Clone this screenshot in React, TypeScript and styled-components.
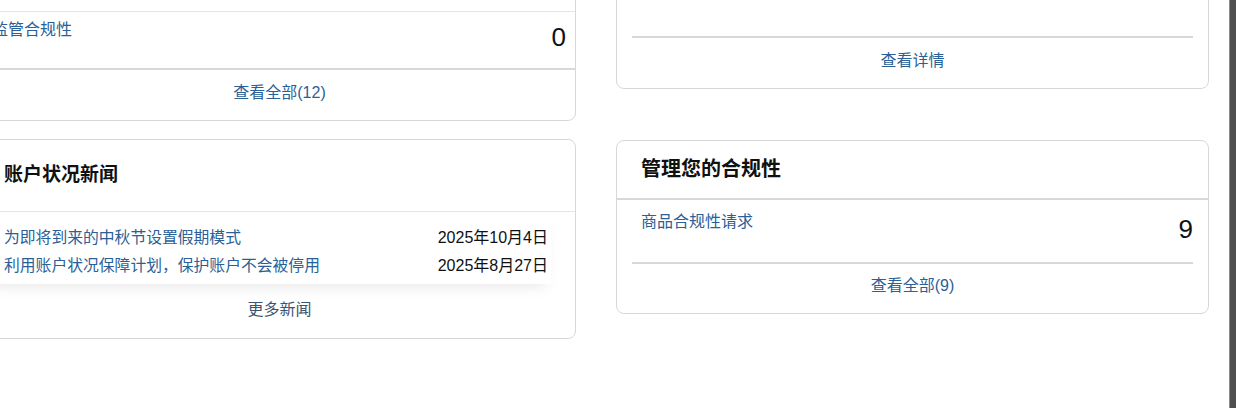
import React from "react";
import styled, { createGlobalStyle } from "styled-components";

const Global = createGlobalStyle`
  html, body { margin: 0; padding: 0; background: #ffffff; }
  body {
    height: 408px;
    overflow: hidden;
    font-family: "Liberation Sans", Arial, "Noto Sans CJK SC", sans-serif;
    color: #0f1111;
  }
`;

const Page = styled.div`
  display: flex;
  width: 1236px;
  height: 408px;
  overflow: hidden;
`;

const Main = styled.div`
  flex: 1;
  overflow: hidden;
`;

const ScrollStrip = styled.div`
  width: 6px;
  flex: none;
  background: #4f4f4f;
  border-left: 1px solid #8c8c8c;
`;

const Grid = styled.div`
  display: grid;
  grid-template-columns: 593px 593px;
  column-gap: 40px;
  margin-left: -17px;
  align-items: start;
`;

const Column = styled.div<{ $gap: number }>`
  display: flex;
  flex-direction: column;
  gap: ${(p) => p.$gap}px;
  margin-top: -60px;
`;

const Card = styled.section`
  border: 1px solid #d5d9d9;
  border-radius: 8px;
  background: #ffffff;
  overflow: hidden;
`;

const Spacer = styled.div<{ $h: number }>`
  height: ${(p) => p.$h}px;
`;

const MetricRow = styled.div<{ $h: number; $pl: number; $pr: number; $pt: number; $top?: boolean }>`
  display: flex;
  justify-content: space-between;
  align-items: flex-start;
  box-sizing: border-box;
  height: ${(p) => p.$h}px;
  padding: ${(p) => p.$pt}px ${(p) => p.$pr}px 0 ${(p) => p.$pl}px;
  border-top: ${(p) => (p.$top ? "1px solid #e3e6e6" : "none")};
`;

const MetricLabel = styled.a`
  font-size: 16px;
  line-height: 20px;
  color: #2a5f97;
  text-decoration: none;
`;

const MetricValue = styled.span`
  font-size: 26px;
  line-height: 30px;
  margin-top: 2px;
  color: #0f1111;
`;

const Rule = styled.div<{ $inset: number }>`
  height: 2px;
  background: #d5d9d9;
  margin: 0 ${(p) => p.$inset}px;
`;

const Footer = styled.div<{ $pt: number; $pb: number }>`
  display: flex;
  justify-content: center;
  padding: ${(p) => p.$pt}px 0 ${(p) => p.$pb}px;
`;

const FooterLink = styled.a<{ $muted?: boolean }>`
  font-size: 16px;
  line-height: 20px;
  color: ${(p) => (p.$muted ? "#3b5470" : "#2a5f97")};
  text-decoration: none;
`;

const Header = styled.div<{ $pt: number; $pb: number; $pl: number; $line: "thin" | "thick" }>`
  padding: ${(p) => p.$pt}px 20px ${(p) => p.$pb}px ${(p) => p.$pl}px;
  border-bottom: ${(p) => (p.$line === "thin" ? "1px solid #e3e6e6" : "2px solid #d5d9d9")};
`;

const Title = styled.h2<{ $size: number }>`
  margin: 0;
  font-size: ${(p) => p.$size}px;
  line-height: 28px;
  font-weight: 700;
  color: #0f1111;
`;

const NewsList = styled.ul`
  list-style: none;
  margin: 0 24px 0 0;
  padding: 12px 3px 4px 20px;
  background: #ffffff;
  box-shadow: 0 8px 14px -6px rgba(0, 0, 0, 0.1);
`;

const NewsItem = styled.li`
  display: flex;
  justify-content: space-between;
  font-size: 16px;
  line-height: 28px;
`;

const NewsLink = styled.a`
  color: #2a5f97;
  text-decoration: none;
  font-size: 15.8px;
`;

const NewsDate = styled.span`
  color: #0f1111;
`;

const news = [
  { title: "为即将到来的中秋节设置假期模式", date: "2025年10月4日" },
  { title: "利用账户状况保障计划，保护账户不会被停用", date: "2025年8月27日" },
];

export default function App() {
  return (
    <>
      <Global />
      <Page>
        <Main>
          <Grid>
            <Column $gap={18}>
              <Card>
                <MetricRow $h={70} $pl={8} $pr={10} $pt={8} />
                <MetricRow $h={57} $pl={8} $pr={9} $pt={8} $top>
                  <MetricLabel>监管合规性</MetricLabel>
                  <MetricValue>0</MetricValue>
                </MetricRow>
                <Rule $inset={0} />
                <Footer $pt={13} $pb={17}>
                  <FooterLink>查看全部(12)</FooterLink>
                </Footer>
              </Card>
              <Card>
                <Header $pt={21} $pb={22} $pl={20} $line="thin">
                  <Title $size={19}>账户状况新闻</Title>
                </Header>
                <NewsList>
                  {news.map((n) => (
                    <NewsItem key={n.title}>
                      <NewsLink>{n.title}</NewsLink>
                      <NewsDate>{n.date}</NewsDate>
                    </NewsItem>
                  ))}
                </NewsList>
                <Footer $pt={16} $pb={18}>
                  <FooterLink $muted>更多新闻</FooterLink>
                </Footer>
              </Card>
            </Column>
            <Column $gap={51}>
              <Card>
                <Spacer $h={95} />
                <Rule $inset={15} />
                <Footer $pt={13} $pb={17}>
                  <FooterLink>查看详情</FooterLink>
                </Footer>
              </Card>
              <Card>
                <Header $pt={14} $pb={15} $pl={24} $line="thick">
                  <Title $size={20}>管理您的合规性</Title>
                </Header>
                <MetricRow $h={62} $pl={24} $pr={15} $pt={12}>
                  <MetricLabel>商品合规性请求</MetricLabel>
                  <MetricValue>9</MetricValue>
                </MetricRow>
                <Rule $inset={15} />
                <Footer $pt={12} $pb={17}>
                  <FooterLink>查看全部(9)</FooterLink>
                </Footer>
              </Card>
            </Column>
          </Grid>
        </Main>
        <ScrollStrip />
      </Page>
    </>
  );
}
